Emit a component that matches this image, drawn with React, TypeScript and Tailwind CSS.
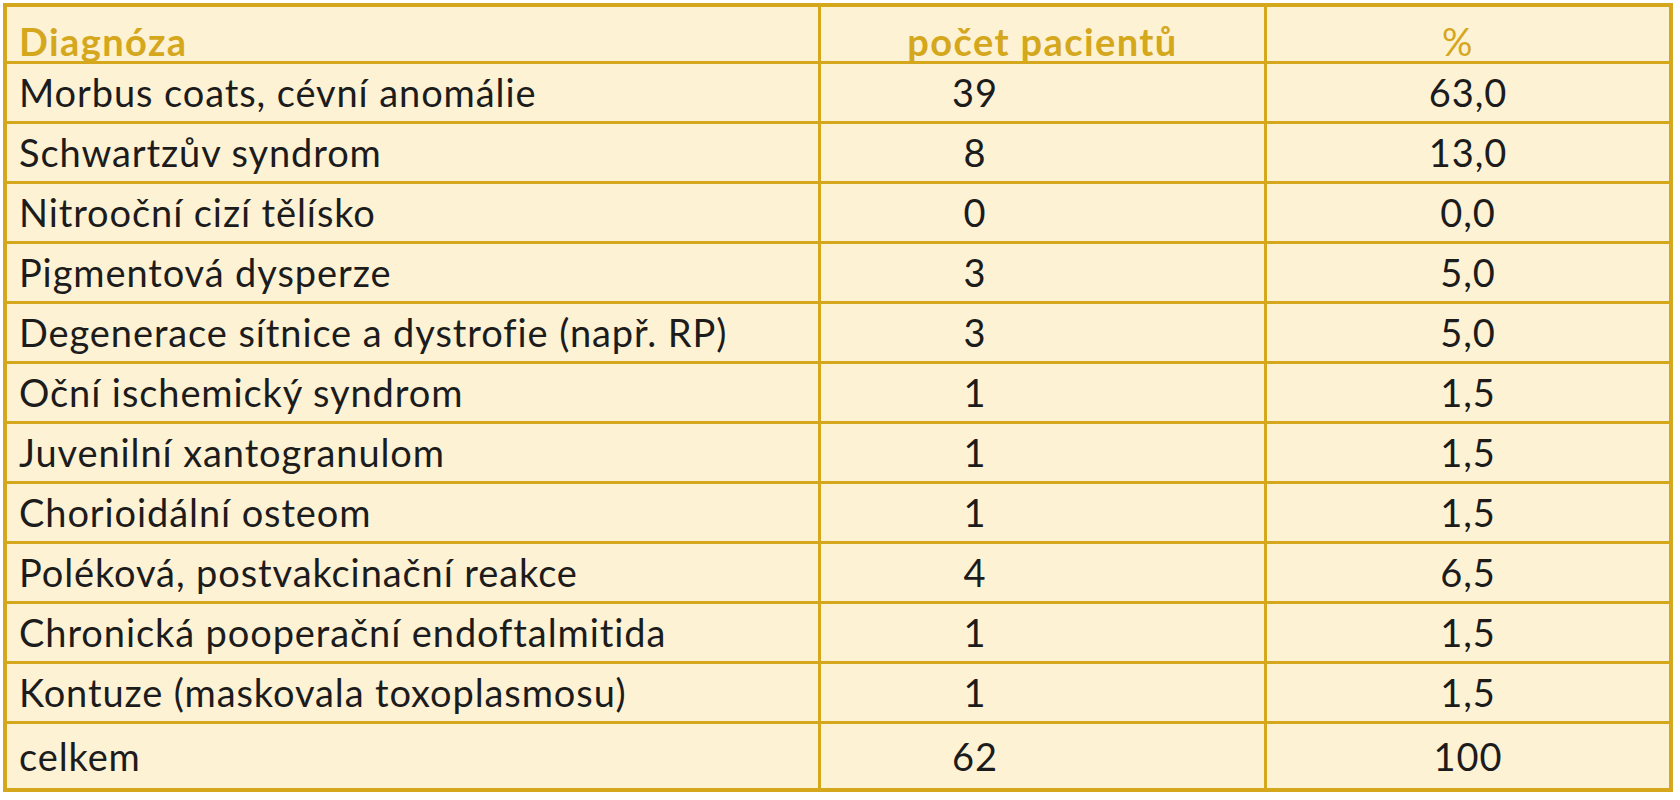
const rows: [string, string, string][] = [
  ['Morbus coats, cévní anomálie', '39', '63,0'],
  ['Schwartzův syndrom', '8', '13,0'],
  ['Nitrooční cizí tělísko', '0', '0,0'],
  ['Pigmentová dysperze', '3', '5,0'],
  ['Degenerace sítnice a dystrofie (např. RP)', '3', '5,0'],
  ['Oční ischemický syndrom', '1', '1,5'],
  ['Juvenilní xantogranulom', '1', '1,5'],
  ['Chorioidální osteom', '1', '1,5'],
  ['Poléková, postvakcinační reakce', '4', '6,5'],
  ['Chronická pooperační endoftalmitida', '1', '1,5'],
  ['Kontuze (maskovala toxoplasmosu)', '1', '1,5'],
];

export default function App() {
  return (
    <div className="min-h-screen bg-white pl-[3px] pt-[3px] font-['Lato','Noto_Sans',sans-serif] text-[38px] tracking-[0.9px] text-[#1c1c1c]">
      <div className="w-[1670px] border-4 border-[#d4a71c] bg-[#fef2d4]">
        {/* header */}
        <div className="grid h-[57px] grid-cols-[814px_446px_1fr] border-b-[3px] border-[#d4a71c] font-bold tracking-[1.4px] text-[#d4a71c]">
          <div className="flex items-center border-r-[3px] border-[#d4a71c] pl-[12px] pt-[6px]">Diagnóza</div>
          <div className="flex items-center justify-center border-r-[3px] border-[#d4a71c] pt-[6px]">počet pacientů</div>
          <div className="flex items-center justify-center pt-[6px] pr-[20px] font-normal">%</div>
        </div>

        {rows.map(([name, count, pct]) => (
          <div
            key={name}
            className="grid h-[60px] grid-cols-[814px_446px_1fr] border-b-[3px] border-[#d4a71c]"
          >
            <div className="flex items-center border-r-[3px] border-[#d4a71c] pl-[12px]">{name}</div>
            <div className="flex items-center justify-center border-r-[3px] border-[#d4a71c] pr-[135px]">{count}</div>
            <div className="flex items-center justify-center">{pct}</div>
          </div>
        ))}

        <div className="grid h-[64px] grid-cols-[814px_446px_1fr]">
          <div className="flex items-center border-r-[3px] border-[#d4a71c] pl-[12px]">celkem</div>
          <div className="flex items-center justify-center border-r-[3px] border-[#d4a71c] pr-[135px]">62</div>
          <div className="flex items-center justify-center">100</div>
        </div>
      </div>
    </div>
  );
}
